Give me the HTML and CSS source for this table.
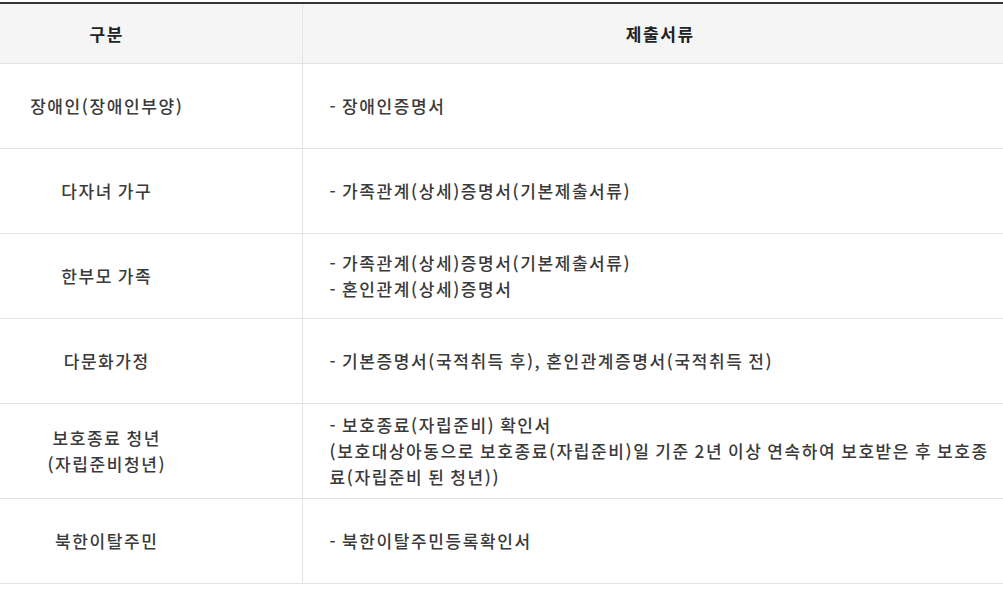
FILE: index.html
```html
<!DOCTYPE html>
<html lang="ko">
<head>
<meta charset="utf-8">
<title>제출서류</title>
<link rel="stylesheet" href="styles.css">
</head>
<body>
<table class="doc-table">
  <colgroup>
    <col class="col-type">
    <col class="col-docs">
  </colgroup>
  <thead>
    <tr>
      <th class="cell-type">구분</th>
      <th class="cell-docs-head">제출서류</th>
    </tr>
  </thead>
  <tbody>
    <tr>
      <td class="cell-type">장애인(장애인부양)</td>
      <td class="cell-docs">- 장애인증명서</td>
    </tr>
    <tr>
      <td class="cell-type">다자녀 가구</td>
      <td class="cell-docs">- 가족관계(상세)증명서(기본제출서류)</td>
    </tr>
    <tr>
      <td class="cell-type">한부모 가족</td>
      <td class="cell-docs">- 가족관계(상세)증명서(기본제출서류)<br>- 혼인관계(상세)증명서</td>
    </tr>
    <tr>
      <td class="cell-type">다문화가정</td>
      <td class="cell-docs">- 기본증명서(국적취득 후), 혼인관계증명서(국적취득 전)</td>
    </tr>
    <tr>
      <td class="cell-type">보호종료 청년<br>(자립준비청년)</td>
      <td class="cell-docs">- 보호종료(자립준비) 확인서<br>(보호대상아동으로 보호종료(자립준비)일 기준 2년 이상 연속하여 보호받은 후 보호종료(자립준비 된 청년))</td>
    </tr>
    <tr>
      <td class="cell-type">북한이탈주민</td>
      <td class="cell-docs">- 북한이탈주민등록확인서</td>
    </tr>
  </tbody>
</table>
</body>
</html>
```
FILE: styles.css
```css
html, body {
  margin: 0;
  padding: 0;
  background: #fff;
  overflow: hidden;
}
body {
  padding-top: 2px;
  font-family: "Noto Sans CJK KR", "Noto Sans", sans-serif;
}
.doc-table {
  width: 1003px;
  border-collapse: collapse;
  table-layout: fixed;
  border-top: 2px solid #333;
  font-size: 17px;
  line-height: 26px;
  letter-spacing: 1.6px;
  word-spacing: -1.5px;
  font-weight: 500;
  color: #3a3a3a;
}
.col-type { width: 302px; }
.doc-table th {
  height: 59px;
  background: #f5f5f5;
  color: #222;
  font-weight: 700;
  font-size: 17px;
  border-bottom: 1px solid #e3e3e3;
  padding: 0;
}
.doc-table td {
  height: 85px;
  border-bottom: 1px solid #e3e3e3;
  padding: 8px 0;
  box-sizing: border-box;
  vertical-align: middle;
}
.cell-type {
  text-align: center;
  padding-right: 88px !important;
  border-right: 1px solid #e3e3e3;
}
.cell-docs-head {
  text-align: center;
  padding-left: 15px !important;
}
.doc-table .cell-docs {
  text-align: left;
  padding-left: 27px;
  padding-right: 0;
}
```
